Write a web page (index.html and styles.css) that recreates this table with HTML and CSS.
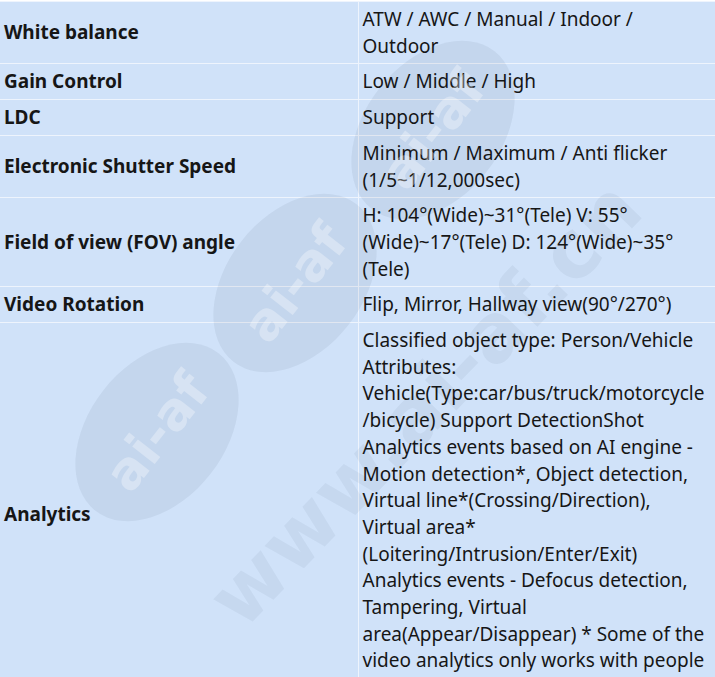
FILE: index.html
```html
<!DOCTYPE html>
<html lang="en">
<head>
<meta charset="utf-8">
<title>Specifications</title>
<link rel="stylesheet" href="styles.css">
</head>
<body>
<div class="page">
  <table class="spec">
    <colgroup><col class="c-label"><col class="c-value"></colgroup>
    <tbody>
      <tr><td class="label">White balance</td><td class="value">ATW / AWC / Manual / Indoor /<br>Outdoor</td></tr>
      <tr><td class="label">Gain Control</td><td class="value">Low / Middle / High</td></tr>
      <tr><td class="label">LDC</td><td class="value">Support</td></tr>
      <tr><td class="label">Electronic Shutter Speed</td><td class="value">Minimum / Maximum / Anti flicker<br>(1/5~1/12,000sec)</td></tr>
      <tr><td class="label">Field of view (FOV) angle</td><td class="value">H: 104°(Wide)~31°(Tele) V: 55°<br>(Wide)~17°(Tele) D: 124°(Wide)~35°<br>(Tele)</td></tr>
      <tr><td class="label">Video Rotation</td><td class="value">Flip, Mirror, Hallway view(90°/270°)</td></tr>
      <tr><td class="label">Analytics</td><td class="value value-long">Classified object type: Person/Vehicle<br>Attributes:<br>Vehicle(Type:car/bus/truck/motorcycle<br>/bicycle) Support DetectionShot<br>Analytics events based on AI engine -<br>Motion detection*, Object detection,<br>Virtual line*(Crossing/Direction),<br>Virtual area*<br>(Loitering/Intrusion/Enter/Exit)<br>Analytics events - Defocus detection,<br>Tampering, Virtual<br>area(Appear/Disappear) * Some of the<br>video analytics only works with people</td></tr>
    </tbody>
  </table>
  <div class="watermark" aria-hidden="true">
    <div class="badge badge-c"><span>ai-af</span></div>
    <div class="badge badge-a"><span>ai-af</span></div>
    <div class="badge badge-b"><span>ai-af</span></div>
    <div class="site">www.ai-af.cn</div>
  </div>
</div>
</body>
</html>
```

FILE: styles.css
```css
html, body {
  margin: 0;
  padding: 0;
  background: #ffffff;
}

.page {
  position: relative;
  width: 715px;
  height: 677px;
  overflow: hidden;
  padding-top: 1px;
  box-sizing: border-box;
}

.spec {
  width: 715px;
  table-layout: fixed;
  border-collapse: collapse;
  background: #d0e2f9;
  color: #161616;
  font-family: "Noto Sans", "Open Sans", sans-serif;
  font-size: 19px;
  line-height: 26.7px;
}

.c-label { width: 358px; }

.spec td {
  border: 1px solid #eef4fd;
  padding: 4px 4px;
  vertical-align: middle;
}

.spec td:first-child { border-left: 0; }
.spec td:last-child { border-right: 0; }

.spec .label {
  font-weight: 700;
  padding-left: 4px;
}

.spec .value {
  font-weight: 400;
}

.spec .value-long {
  padding-bottom: 31px;
}

.watermark {
  position: absolute;
  inset: 0;
  pointer-events: none;
}

.badge {
  position: absolute;
  width: 200px;
  height: 136px;
  margin: -68px 0 0 -100px;
  border-radius: 50%;
  background: rgba(20, 30, 50, 0.06);
  transform: rotate(-52deg);
  display: flex;
  align-items: center;
  justify-content: center;
}

.badge span {
  font-family: "DejaVu Sans", sans-serif;
  font-weight: 700;
  font-size: 52px;
  line-height: 1;
  color: rgba(255, 255, 255, 0.32);
  white-space: nowrap;
}

.badge-c { left: 433px; top: 130px; }
.badge-a { left: 295px; top: 283px; }
.badge-b { left: 157px; top: 432px; }

.site {
  position: absolute;
  left: 425px;
  top: 404px;
  transform: translate(-50%, -50%) rotate(-46deg);
  font-family: "DejaVu Sans", sans-serif;
  font-weight: 700;
  font-size: 80px;
  line-height: 1;
  color: rgba(20, 30, 50, 0.05);
  white-space: nowrap;
}
```
